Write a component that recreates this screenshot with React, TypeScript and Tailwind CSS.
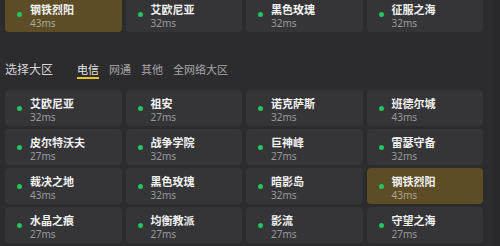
import React from 'react';

type Server = { name: string; ping: number; active?: boolean };

const recent: Server[] = [
  { name: '钢铁烈阳', ping: 43, active: true },
  { name: '艾欧尼亚', ping: 32 },
  { name: '黑色玫瑰', ping: 32 },
  { name: '征服之海', ping: 32 },
];

const servers: Server[] = [
  { name: '艾欧尼亚', ping: 32 },
  { name: '祖安', ping: 27 },
  { name: '诺克萨斯', ping: 32 },
  { name: '班德尔城', ping: 43 },
  { name: '皮尔特沃夫', ping: 27 },
  { name: '战争学院', ping: 32 },
  { name: '巨神峰', ping: 27 },
  { name: '雷瑟守备', ping: 32 },
  { name: '裁决之地', ping: 43 },
  { name: '黑色玫瑰', ping: 32 },
  { name: '暗影岛', ping: 32 },
  { name: '钢铁烈阳', ping: 43, active: true },
  { name: '水晶之痕', ping: 27 },
  { name: '均衡教派', ping: 27 },
  { name: '影流', ping: 27 },
  { name: '守望之海', ping: 27 },
];

const tabs = ['电信', '网通', '其他', '全网络大区'];

const ServerCard: React.FC<{ server: Server }> = ({ server }) => (
  <div
    className={`h-[36px] rounded-[4px] flex items-center pl-[12px] gap-[8px] ${
      server.active ? 'bg-[#5c4d26]' : 'bg-[#353538]'
    }`}
  >
    <span className="w-[5px] h-[5px] rounded-full bg-[#22c55e] shrink-0"></span>
    <div className="flex flex-col gap-[1px] pt-[5px]">
      <span className="text-[11px] leading-[12px] font-bold text-[#f2f2f2]">{server.name}</span>
      <span className={`text-[10px] leading-[12px] ${server.active ? 'text-[#aea68e]' : 'text-[#9a9a9c]'}`}>
        {server.ping}ms
      </span>
    </div>
  </div>
);

export default function App() {
  return (
    <div
      className="w-[500px] h-[246px] overflow-hidden bg-[#2c2c2e] flex"
      style={{ fontFamily: '"Noto Sans", "Noto Sans CJK SC", sans-serif' }}
    >
      <div className="w-[483px] pl-[5px] shrink-0">
        {/* recent servers, scrolled partly out of view */}
        <div className="grid grid-cols-4 gap-x-[4px] mt-[-4px]">
          {recent.map((s, i) => (
            <ServerCard key={i} server={s} />
          ))}
        </div>

        {/* region header */}
        <div className="h-[58px] pt-[30px] flex items-start">
          <span className="text-[12px] leading-[16px] text-[#d4d4d6]">选择大区</span>
          <div className="flex gap-[10px] ml-[24px] mt-[1px]">
            {tabs.map((t, i) => (
              <span
                key={t}
                className={`text-[11px] leading-[14px] border-b-2 ${
                  i === 0 ? 'text-[#e8e8e8] border-[#e8c21a]' : 'text-[#a6a6a8] border-transparent'
                }`}
              >
                {t}
              </span>
            ))}
          </div>
        </div>

        <div className="grid grid-cols-4 gap-x-[4px] gap-y-[3px]">
          {servers.map((s, i) => (
            <ServerCard key={i} server={s} />
          ))}
        </div>
      </div>
      <div className="flex-1"></div>
      <div className="w-[7px] bg-[#29292b]"></div>
    </div>
  );
}
